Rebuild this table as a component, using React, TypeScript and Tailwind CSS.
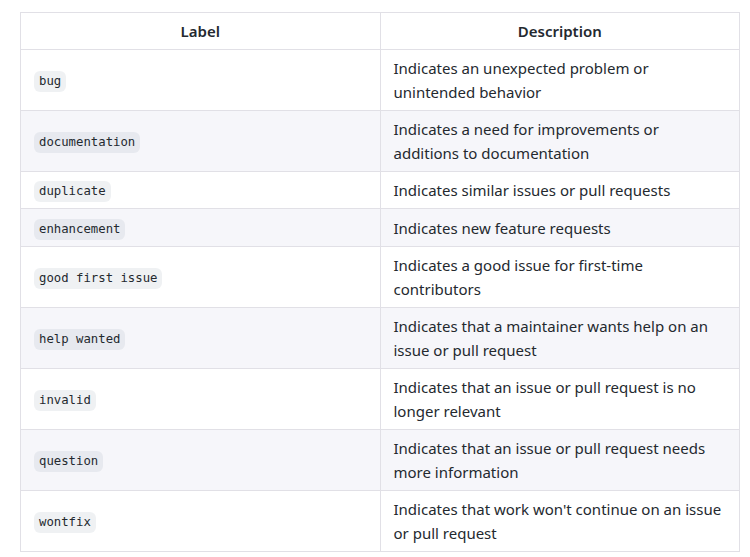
const LABELS = [
  { name: "bug", desc: "Indicates an unexpected problem or unintended behavior" },
  { name: "documentation", desc: "Indicates a need for improvements or additions to documentation" },
  { name: "duplicate", desc: "Indicates similar issues or pull requests" },
  { name: "enhancement", desc: "Indicates new feature requests" },
  { name: "good first issue", desc: "Indicates a good issue for first-time contributors" },
  { name: "help wanted", desc: "Indicates that a maintainer wants help on an issue or pull request" },
  { name: "invalid", desc: "Indicates that an issue or pull request is no longer relevant" },
  { name: "question", desc: "Indicates that an issue or pull request needs more information" },
  { name: "wontfix", desc: "Indicates that work won't continue on an issue or pull request" },
];

export default function App() {
  return (
    <div className="min-h-screen bg-white pt-3 pl-5 font-['Noto_Sans',sans-serif] text-[15px] leading-6 text-[#24292f]">
      <table className="w-[720px] table-fixed border-collapse">
        <thead>
          <tr className="bg-white">
            <th className="w-1/2 border border-[#e1e0e6] px-[13px] py-[6px] text-center font-semibold">Label</th>
            <th className="w-1/2 border border-[#e1e0e6] px-[13px] py-[6px] text-center font-semibold">Description</th>
          </tr>
        </thead>
        <tbody>
          {LABELS.map((l, i) => (
            <tr key={l.name} className={i % 2 === 1 ? "bg-[#f6f6fa]" : "bg-white"}>
              <td className="border border-[#e1e0e6] px-[13px] py-[6px] align-middle">
                <code className="inline-block rounded-md bg-[#afb8c1]/20 px-[5px] py-[3px] align-middle font-['DejaVu_Sans_Mono',monospace] text-[12.3px] leading-[15px]">
                  {l.name}
                </code>
              </td>
              <td className="border border-[#e1e0e6] px-[13px] py-[6px] align-middle">{l.desc}</td>
            </tr>
          ))}
        </tbody>
      </table>
    </div>
  );
}
